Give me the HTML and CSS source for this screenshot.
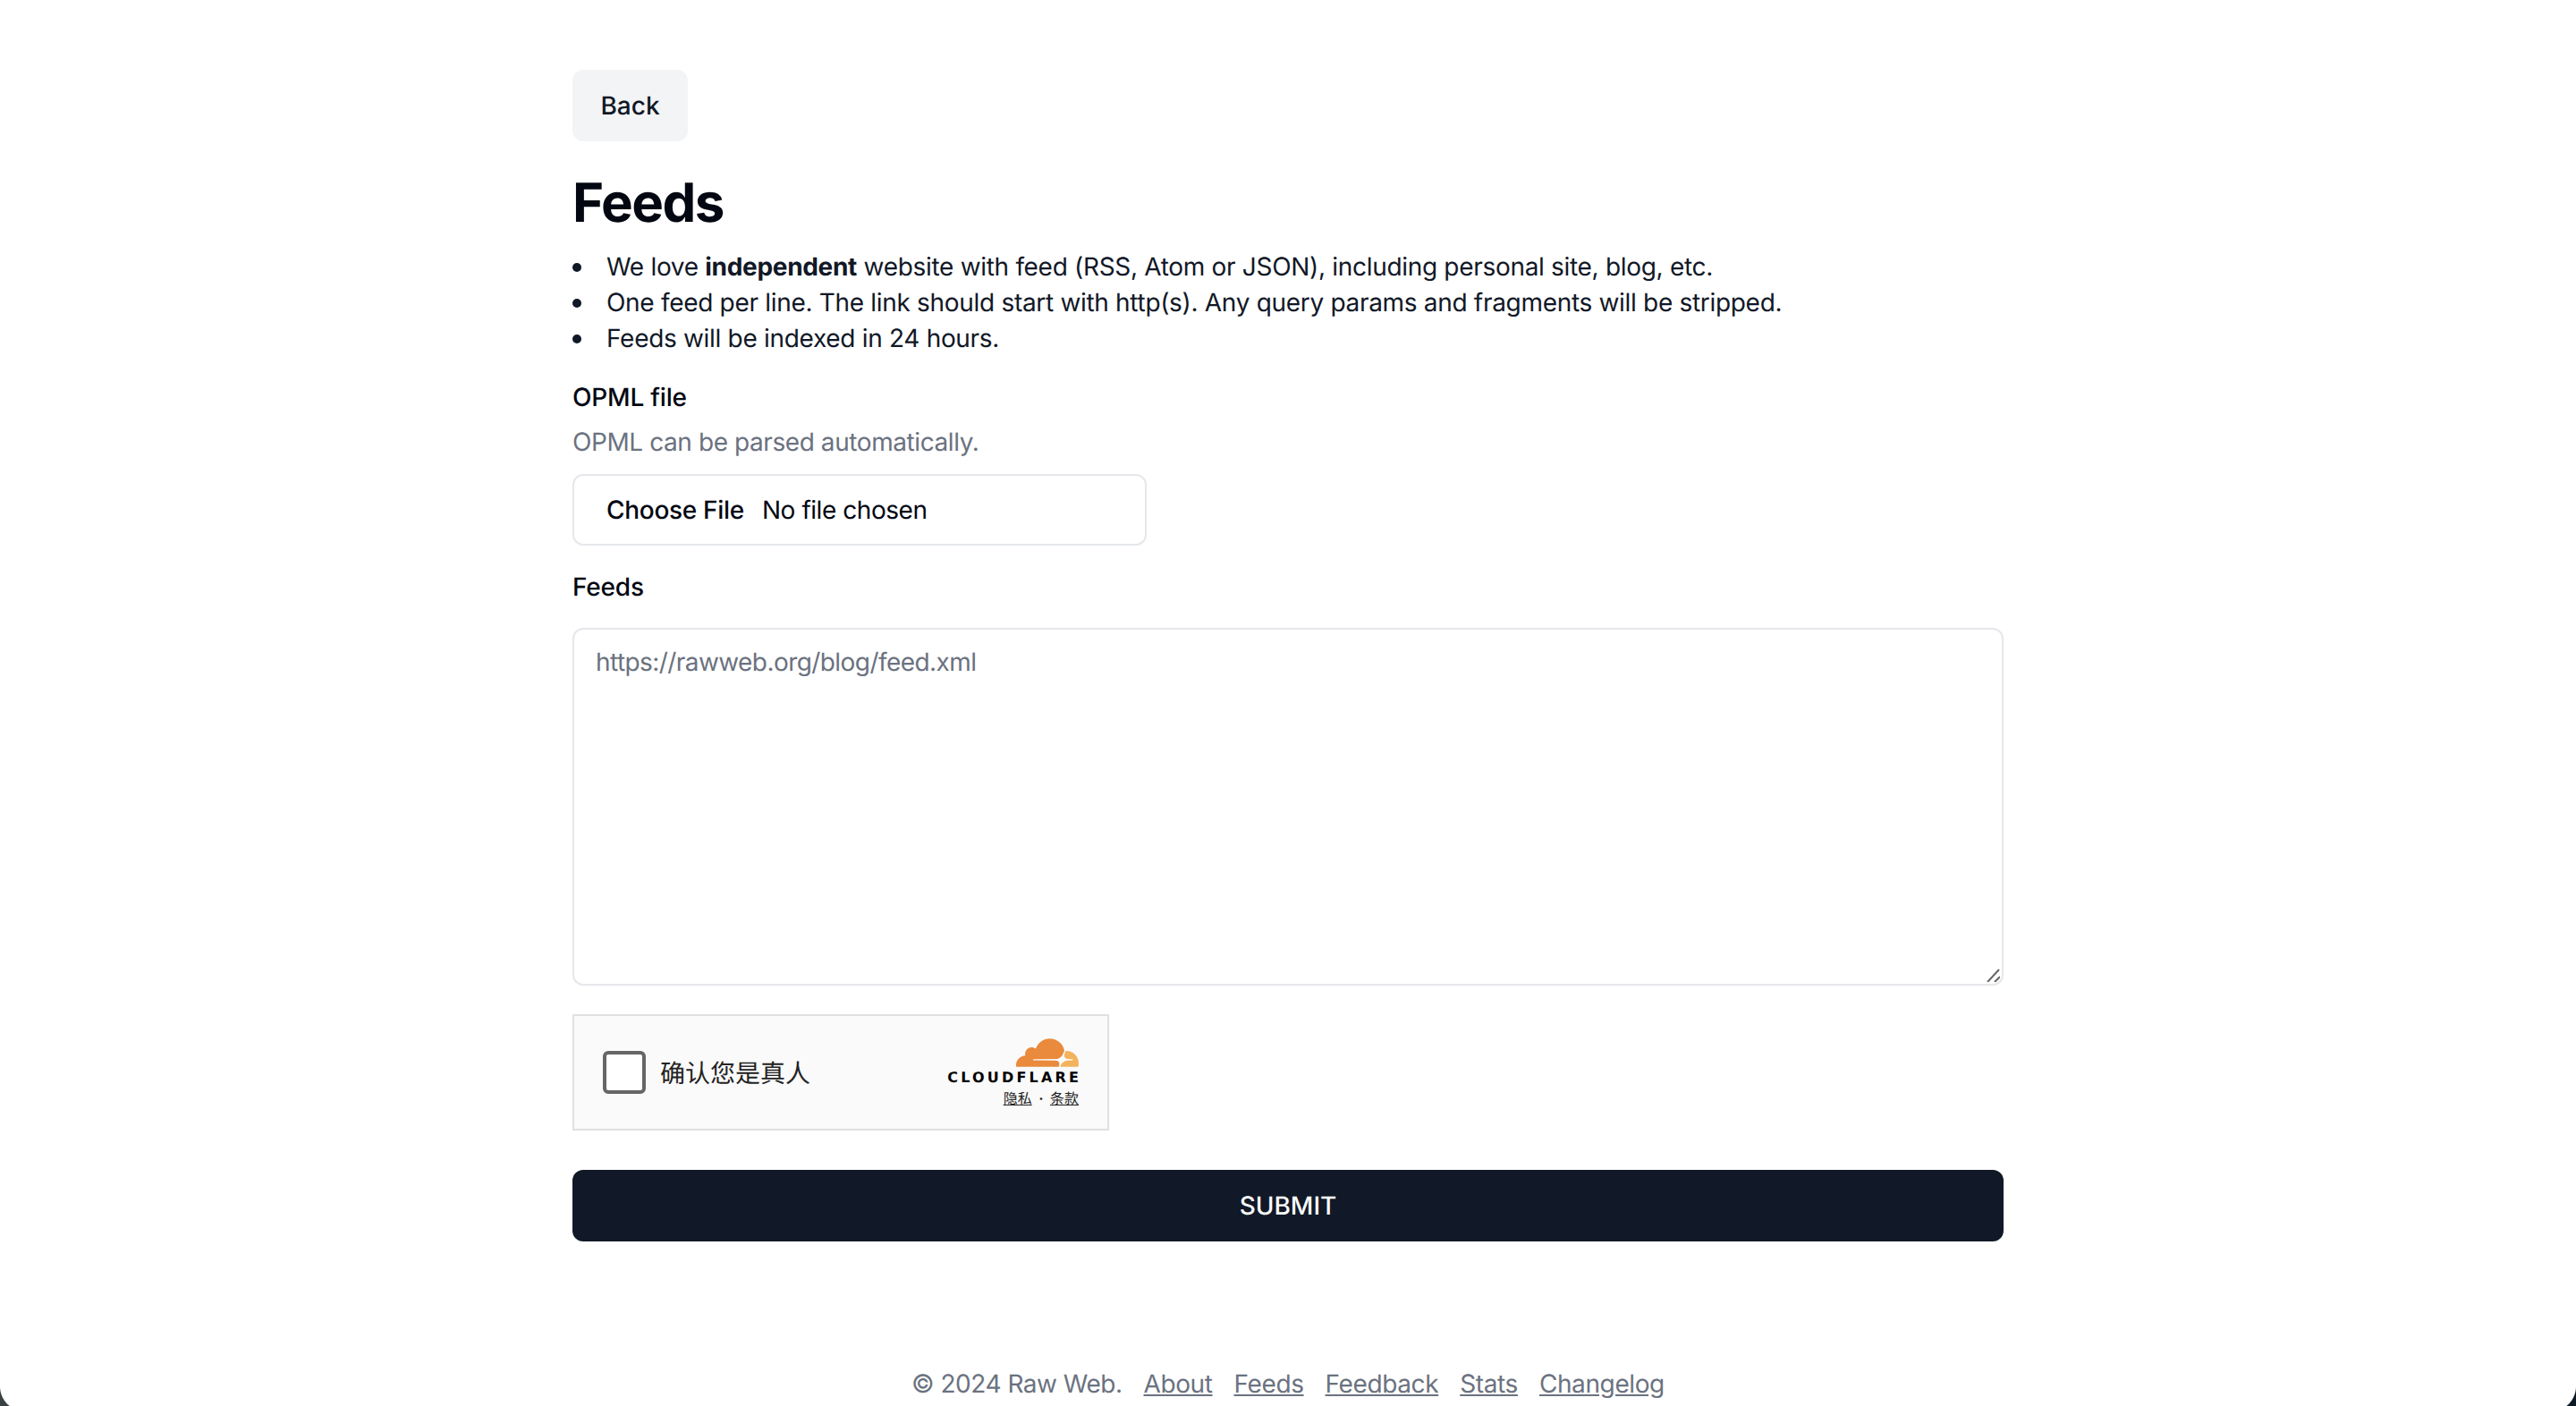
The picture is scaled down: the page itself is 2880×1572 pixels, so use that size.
FILE: index.html
```html
<!DOCTYPE html>
<html lang="en">
<head>
<meta charset="utf-8">
<title>Feeds - Raw Web</title>
<link rel="stylesheet" href="styles.css">
</head>
<body>
<main class="page">
  <a class="back" href="#">Back</a>
  <h1 class="title">Feeds</h1>
  <ul class="notes">
    <li>We love <strong>independent</strong> website with feed (RSS, Atom or JSON), including personal site, blog, etc.</li>
    <li>One feed per line. The link should start with http(s). Any query params and fragments will be stripped.</li>
    <li>Feeds will be indexed in 24 hours.</li>
  </ul>
  <form class="form">
    <div class="field-opml">
      <div class="label">OPML file</div>
      <p class="hint">OPML can be parsed automatically.</p>
      <label class="file">
        <span class="file-btn">Choose File</span>
        <span class="file-name">No file chosen</span>
      </label>
    </div>
    <div class="field-feeds">
      <label class="label" for="feeds">Feeds</label>
      <div class="feeds-wrap">
        <textarea id="feeds" class="feeds" placeholder="https://rawweb.org/blog/feed.xml"></textarea>
        <svg class="grip" viewBox="0 0 16 16" aria-hidden="true"><path d="M2 16 15 2M10 16l6-6"/></svg>
      </div>
    </div>
    <div class="turnstile">
      <span class="check"></span>
      <span class="verify">确认您是真人</span>
      <div class="brand">
        <svg class="cloud" viewBox="0 6.55 24 10.9" aria-hidden="true">
          <path class="cloud-main" d="M16.5088 16.8447c.1475-.5068.0908-.9707-.1553-1.3154-.2246-.3164-.6045-.499-1.0615-.5205l-8.6592-.1123a.1559.1559 0 0 1-.1333-.0713c-.0283-.042-.0351-.0986-.021-.1553.0278-.084.1123-.1484.2036-.1562l8.7359-.1123c1.0351-.0489 2.1601-.8868 2.5537-1.9136l.499-1.3013c.0215-.0561.0293-.1128.0147-.168-.5625-2.5463-2.835-4.4453-5.5499-4.4453-2.5039 0-4.6284 1.6177-5.3876 3.8614-.4927-.3658-1.1187-.5625-1.794-.499-1.2026.119-2.1665 1.083-2.2861 2.2856-.0283.31-.0069.6128.0635.894C1.5683 13.171 0 14.7754 0 16.752c0 .1748.0142.3515.0352.5273.0141.083.0844.1475.1689.1475h15.9814c.0909 0 .1758-.0645.2032-.1553l.12-.4268z"/>
          <path class="cloud-light" d="M19.2656 11.2813c-.0771 0-.1611 0-.2383.0112-.0566 0-.1054.0415-.127.0976l-.3378 1.1744c-.1475.5068-.0918.9707.1543 1.3164.2256.3164.6055.498 1.0625.5195l1.8437.1133c.0557 0 .1055.0263.1329.0703.0283.043.0351.1074.0214.1562-.0283.084-.1132.1485-.204.1553l-1.921.1123c-1.041.0488-2.1582.8867-2.5527 1.914l-.1406.3585c-.0283.0713.0215.1416.0986.1416h6.5977c.0771 0 .1474-.0489.169-.126.1122-.4082.1757-.837.1757-1.2803 0-2.6025-2.125-4.727-4.7344-4.727"/>
        </svg>
        <span class="wordmark">CLOUDFLARE</span>
        <span class="legal"><a href="#">隐私</a><span class="dot">·</span><a href="#">条款</a></span>
      </div>
    </div>
    <button class="submit" type="button">SUBMIT</button>
  </form>
  <footer class="foot">
    <span class="copy">© 2024 Raw Web.</span>
    <a href="#">About</a>
    <a href="#">Feeds</a>
    <a href="#">Feedback</a>
    <a href="#">Stats</a>
    <a href="#">Changelog</a>
  </footer>
</main>
<div class="corner corner-left"></div>
<div class="corner corner-right"></div>
</body>
</html>
```
FILE: styles.css
```css
* { box-sizing: border-box; }
html, body { margin: 0; height: 100%; overflow: hidden; background: #fff; }
body {
  font-family: Inter, "Noto Sans CJK SC", sans-serif;
  font-size: 28px;
  line-height: 40px;
  color: #111827;
  text-rendering: geometricPrecision;
}
.page {
  width: 1600px;
  margin: 0 auto;
  padding-top: 78px;
  display: flex;
  flex-direction: column;
  align-items: stretch;
}
.back {
  align-self: flex-start;
  height: 80px;
  width: 129px;
  display: flex;
  align-items: center;
  justify-content: center;
  background: #f3f4f6;
  border-radius: 12px;
  font-weight: 500;
  color: #111827;
  text-decoration: none;
}
.title {
  margin: 33px 0 0;
  font-size: 60px;
  line-height: 72px;
  font-weight: 700;
  letter-spacing: -1.5px;
  color: #030712;
}
.notes { margin: 15px 0 0; padding: 0; list-style: none; letter-spacing: -0.31px; }
.notes li::before {
  content: "";
  display: inline-block;
  width: 10px;
  height: 10px;
  margin-right: 28px;
  border-radius: 50%;
  background: #111827;
  vertical-align: 4px;
}
.form { display: flex; flex-direction: column; margin-top: 26px; }
.label { display: block; font-weight: 500; color: #030712; letter-spacing: -0.2px; }
.hint { margin: 10px 0 0; color: #6b7280; letter-spacing: -0.42px; }
.file {
  margin-top: 16px;
  width: 642px;
  height: 80px;
  display: flex;
  align-items: center;
  padding-left: 36px;
  border: 2px solid #e5e7eb;
  border-radius: 12px;
  color: #030712;
  letter-spacing: -0.3px;
}
.file-btn { font-weight: 500; margin-right: 20px; }
.file-name { letter-spacing: -0.45px; }
.field-feeds { margin-top: 26px; display: flex; flex-direction: column; }
.feeds-wrap { position: relative; margin-top: 26px; }
.feeds {
  display: block;
  width: 100%;
  height: 400px;
  padding: 16px 24px;
  border: 2px solid #e5e7eb;
  border-radius: 12px;
  font: inherit;
  color: #030712;
  background: #fff;
  outline: none;
  resize: none;
  text-rendering: geometricPrecision;
}
.feeds::placeholder { color: #6b7280; opacity: 1; letter-spacing: -0.57px; }
.grip {
  position: absolute;
  right: 4px;
  bottom: 4px;
  width: 16px;
  height: 16px;
  fill: none;
  stroke: #666;
  stroke-width: 2;
}
.turnstile {
  margin-top: 32px;
  width: 600px;
  height: 130px;
  display: flex;
  align-items: center;
  padding: 0 32px;
  background: #fafafa;
  border: 2px solid #e0e0e0;
  color: #232323;
}
.check {
  width: 48px;
  height: 48px;
  background: #fff;
  border: 4px solid #666;
  border-radius: 6px;
  flex: none;
}
.verify { margin-left: 16px; font-size: 28px; line-height: 40px; position: relative; top: 1px; }
.brand { margin-left: auto; display: flex; flex-direction: column; align-items: flex-end; }
.cloud { width: 70px; height: 32px; display: block; }
.cloud-main { fill: #e98a3c; }
.cloud-light { fill: #f3b35c; }
.wordmark {
  margin-top: 4px;
  font-family: "DejaVu Sans", sans-serif;
  font-size: 16px;
  line-height: 16px;
  font-weight: 700;
  letter-spacing: 3.2px;
  margin-right: -3.2px;
  color: #000;
}
.legal { margin-top: 5px; font-size: 16px; line-height: 20px; display: flex; align-items: center; }
.legal a { color: #232323; }
.dot { margin: 0 7.5px; font-weight: 700; }
.submit {
  margin-top: 44px;
  height: 80px;
  width: 100%;
  border: 0;
  border-radius: 12px;
  background: #111827;
  color: #f9fafb;
  font: inherit;
  font-weight: 500;
  text-rendering: geometricPrecision;
}
.foot {
  margin-top: 139px;
  display: flex;
  justify-content: center;
  gap: 24px;
  color: #6b7280;
  letter-spacing: -0.39px;
}
.foot .copy { letter-spacing: -0.5px; }
.foot a { color: #6b7280; text-decoration: underline; }
.corner { position: fixed; bottom: 0; width: 28px; height: 22px; }
.corner-left { left: 0; background: radial-gradient(circle at 28px 0, transparent 27.5px, #3a4142 28.5px); }
.corner-right { right: 0; background: radial-gradient(circle at 0 0, transparent 27.5px, #0d1a26 28.5px); }
```
